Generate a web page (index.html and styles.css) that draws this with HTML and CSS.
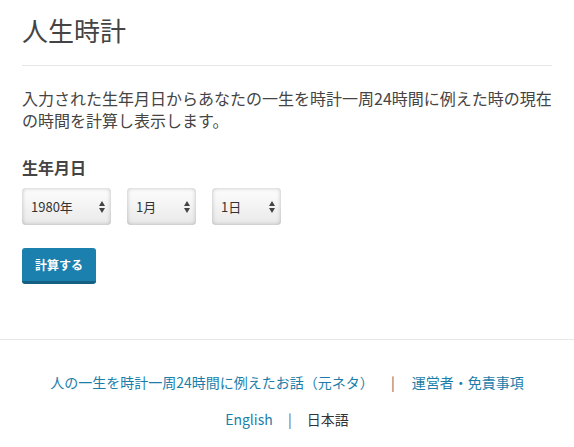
FILE: index.html
```html
<!DOCTYPE html>
<html lang="ja">
<head>
    <meta charset="UTF-8">
    <meta name="viewport" content="width=device-width, initial-scale=1.0">
    <title>人生時計</title>
    <link rel="stylesheet" href="styles.css">
</head>
<body>

    <div class="main">
        <h1>人生時計</h1>

        <p class="lead">入力された生年月日からあなたの一生を時計一周24時間に例えた時の現在の時間を計算し表示します。</p>

        <label class="label">生年月日</label>
        <div class="selects">
            <div class="select year">1980年
                <svg class="arrows" width="6" height="12" viewBox="0 0 6 12"><path d="M3 0L6 5H0z M0 7H6L3 12z" fill="#444"/></svg>
            </div>
            <div class="select">1月
                <svg class="arrows" width="6" height="12" viewBox="0 0 6 12"><path d="M3 0L6 5H0z M0 7H6L3 12z" fill="#444"/></svg>
            </div>
            <div class="select">1日
                <svg class="arrows" width="6" height="12" viewBox="0 0 6 12"><path d="M3 0L6 5H0z M0 7H6L3 12z" fill="#444"/></svg>
            </div>
        </div>

        <button class="btn">計算する</button>
    </div>

    <div class="footer">
        <div class="links">
            <a href="#">人の一生を時計一周24時間に例えたお話（元ネタ）</a>
            <span class="sep">|</span>
            <a href="#">運営者・免責事項</a>
        </div>
        <div class="links lang">
            <a href="#">English</a>
            <span class="sep">|</span>
            <span class="current">日本語</span>
        </div>
    </div>

</body>
</html>
```

FILE: styles.css
```css
body { margin: 0; font-family: "Noto Sans CJK JP", "Noto Sans", sans-serif; color: #444; background: #fff; }
.main { padding: 0 22px; }
h1 { font-size: 26px; font-weight: normal; margin: 0; padding: 13px 0 18px; line-height: 34px; border-bottom: 1px solid #e6e6e6; }
.lead { font-size: 16px; line-height: 22px; margin: 21px 0 25px; }
.label { display: block; font-size: 16px; font-weight: bold; line-height: 22px; margin-bottom: 10px; }
.selects { display: flex; gap: 16px; }
.select { position: relative; width: 69px; height: 37px; box-sizing: border-box; padding-left: 9px; font-size: 13px; line-height: 37px; color: #333; border-radius: 4px; background: linear-gradient(#fdfdfd, #e9e9e9); box-shadow: inset 0 0 4px rgba(0,0,0,0.25); }
.select.year { width: 89px; }
.arrows { position: absolute; right: 6px; top: 13px; }
.btn { display: block; margin-top: 23px; width: 74px; height: 36px; border: none; border-radius: 3px; background: #1b80ae; border-bottom: 3px solid #145f82; color: #fff; font-family: inherit; font-size: 12px; font-weight: bold; padding: 0; cursor: pointer; }
.footer { margin-top: 55px; border-top: 1px solid #e8e8e8; padding-top: 31px; text-align: center; font-size: 14px; }
.links { line-height: 22px; margin-bottom: 15px; }
.links a { color: #1b7eaa; text-decoration: none; }
.sep { color: #666; margin: 0 14px; }
.lang .sep { margin: 0 12px; }
.current { color: #333; }
```
